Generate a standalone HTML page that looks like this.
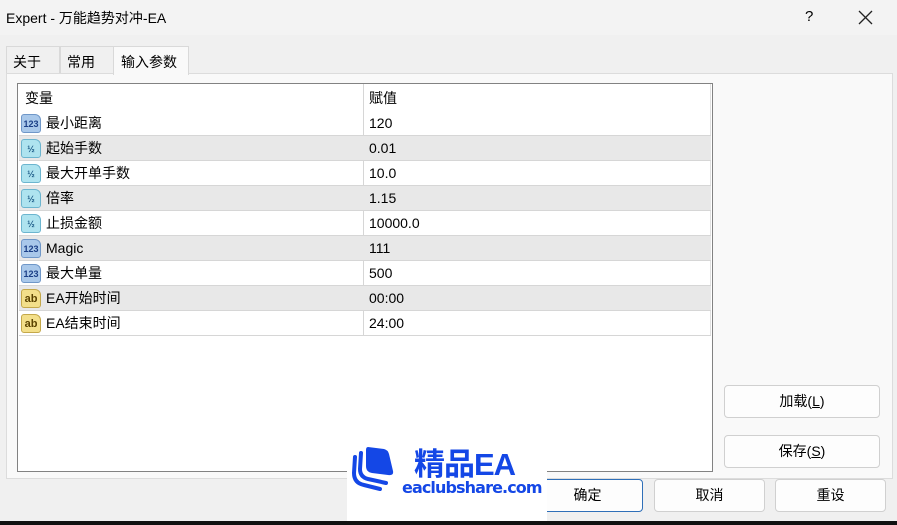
<!DOCTYPE html>
<html><head><meta charset="utf-8"><style>
*{margin:0;padding:0;box-sizing:border-box}
body{width:897px;height:525px;background:#f0f0f0;font-family:"Liberation Sans","Microsoft YaHei","Noto Sans CJK SC",sans-serif;font-size:14px;color:#000;position:relative;overflow:hidden}
.abs{position:absolute}
.title{left:0;top:0;width:897px;height:35px;background:#f3f3f3}
.tab{top:46px;height:27px;border:1px solid #d9d9d9;border-bottom:none;background:#f0f0f0;padding:5px 0 0 6px}
.panel{left:6px;top:73px;width:887px;height:406px;background:#f9f9f9;border:1px solid #dcdcdc}
.table{left:17px;top:83px;width:696px;height:389px;background:#fff;border:1px solid #828282}
.row{position:absolute;left:1px;width:692px;height:25px;border-bottom:1px solid #d6d6d6}
.row.g{background:#e8e8e8}
.row span{position:absolute;top:3px;line-height:18px}
.c1{left:27px}.c2{left:350px}
.sep{position:absolute;left:345px;top:0;width:1px;height:252px;background:#d6d6d6}
.ic{position:absolute;left:2px;top:3px;width:20px;height:19px;border-radius:3px 6px 3px 3px;font-size:9px;font-weight:bold;text-align:center;line-height:18px}
.n{background:#a9c8ea;border:1px solid #6f97c8;color:#1b3f87}
.f{background:#aee3ef;border:1px solid #6cb5cf;color:#1b5a87}
.s{background:#f3df8a;border:1px solid #c4a84a;color:#5b4300;font-size:11px}
.btn{background:#fdfdfd;border:1px solid #d0d0d0;border-radius:4px;text-align:center;line-height:31px;font-size:14px}
</style></head><body>
<div class="abs title"></div>
<div class="abs" style="left:6px;top:8px;font-size:14px">Expert - 万能趋势对冲-EA</div>
<div class="abs" style="left:805px;top:8px;font-size:15px">?</div>
<svg class="abs" style="left:858px;top:10px" width="15" height="15"><path d="M1 1L14 14M14 1L1 14" stroke="#222" stroke-width="1.3"/></svg>
<div class="abs tab" style="left:6px;width:54px">关于</div>
<div class="abs tab" style="left:60px;width:54px">常用</div>
<div class="abs panel"></div>
<div class="abs tab" style="left:113px;top:46px;height:29px;width:76px;background:#f9f9f9;z-index:2;padding-left:7px">输入参数</div>
<div class="abs table">
<div class="sep"></div>
<div class="abs" style="left:692px;top:0;width:1px;height:252px;background:#e0e0e0"></div>
<div class="row" style="top:2px;border-bottom:none"><span style="left:6px">变量</span><span class="c2">赋值</span></div>
<div class="row" style="top:27px"><div class="ic n">123</div><span class="c1">最小距离</span><span class="c2">120</span></div>
<div class="row g" style="top:52px"><div class="ic f">½</div><span class="c1">起始手数</span><span class="c2">0.01</span></div>
<div class="row" style="top:77px"><div class="ic f">½</div><span class="c1">最大开单手数</span><span class="c2">10.0</span></div>
<div class="row g" style="top:102px"><div class="ic f">½</div><span class="c1">倍率</span><span class="c2">1.15</span></div>
<div class="row" style="top:127px"><div class="ic f">½</div><span class="c1">止损金额</span><span class="c2">10000.0</span></div>
<div class="row g" style="top:152px"><div class="ic n">123</div><span class="c1">Magic</span><span class="c2">111</span></div>
<div class="row" style="top:177px"><div class="ic n">123</div><span class="c1">最大单量</span><span class="c2">500</span></div>
<div class="row g" style="top:202px"><div class="ic s">ab</div><span class="c1">EA开始时间</span><span class="c2">00:00</span></div>
<div class="row" style="top:227px"><div class="ic s">ab</div><span class="c1">EA结束时间</span><span class="c2">24:00</span></div>
</div>
<div class="abs btn" style="left:724px;top:385px;width:156px;height:33px">加载(<u>L</u>)</div>
<div class="abs btn" style="left:724px;top:435px;width:156px;height:33px">保存(<u>S</u>)</div>
<div class="abs btn" style="left:532px;top:479px;width:111px;height:33px;border-color:#2f6fb8;line-height:31px">确定</div>
<div class="abs btn" style="left:654px;top:479px;width:111px;height:33px">取消</div>
<div class="abs btn" style="left:775px;top:479px;width:111px;height:33px">重设</div>
<div class="abs" style="left:0;top:521px;width:897px;height:4px;background:#111"></div>
<div class="abs" style="left:347px;top:440px;width:200px;height:81px;background:#fff"></div>
<svg class="abs" style="left:350px;top:443px" width="46" height="50" viewBox="0 0 46 50">
<path d="M5 14 L4 30 Q4 40 14 42 L30 46" fill="none" stroke="#1447e6" stroke-width="4" stroke-linecap="round"/>
<path d="M11 10 L10 26 Q10 34 18 36 L36 40" fill="none" stroke="#1447e6" stroke-width="4" stroke-linecap="round"/>
<path d="M18 4 L34 6 Q38 7 39 11 L43 28 Q44 33 38 32 L22 30 Q16 29 16 23 L16 7 Q16 4 18 4 Z" fill="#1447e6"/>
</svg>
<div class="abs" style="left:414px;top:439px;font-size:31px;font-weight:bold;color:#1447e6;letter-spacing:-1px">精品EA</div>
<div class="abs" style="left:402px;top:478px;font-size:16px;font-weight:bold;color:#1447e6;font-family:'DejaVu Sans',sans-serif;letter-spacing:-0.9px">eaclubshare.com</div>
</body></html>
